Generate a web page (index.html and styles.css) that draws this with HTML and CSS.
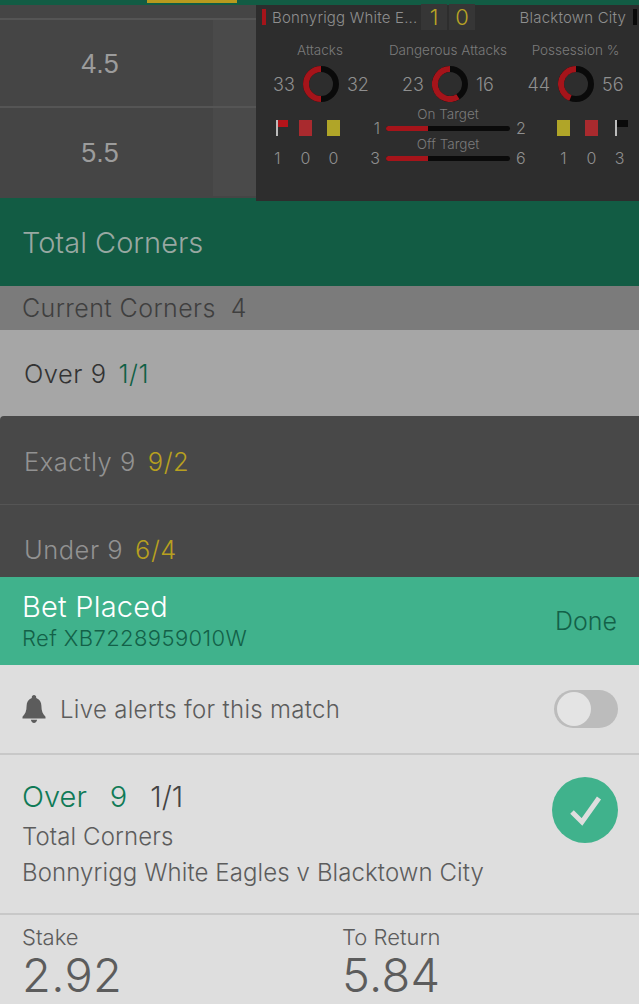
FILE: index.html
```html
<!DOCTYPE html>
<html lang="en">
<head>
    <meta charset="UTF-8" />
    <title>Bet placed</title>
    <link rel="stylesheet" href="styles.css">
</head>
<body>
    <div class="top-strip"><div class="tab-marker"></div></div>

    <section class="lines">
        <div class="line-gap"></div>
        <div class="line-row"><span class="line-label">4.5</span><span class="line-side"></span></div>
        <div class="line-row"><span class="line-label">5.5</span><span class="line-side"></span></div>

        <!-- Match stats overlay -->
        <aside class="stats">
            <div class="score-bar">
                <span class="team-mark red"></span>
                <span class="team home">Bonnyrigg White E...</span>
                <span class="score">1</span>
                <span class="score">0</span>
                <span class="team away">Blacktown City</span>
                <span class="team-mark black"></span>
            </div>
            <div class="stat-cols">
                <div class="stat">
                    <div class="stat-title">Attacks</div>
                    <div class="ring-row">
                        <span>33</span>
                        <svg class="ring" viewBox="0 0 36 36"><circle class="ring-away" cx="18" cy="18" r="15"/><path class="ring-home" d="M18 3A15 15 0 0 0 18 33"/></svg>
                        <span>32</span>
                    </div>
                </div>
                <div class="stat">
                    <div class="stat-title">Dangerous Attacks</div>
                    <div class="ring-row">
                        <span>23</span>
                        <svg class="ring" viewBox="0 0 36 36"><circle class="ring-away" cx="18" cy="18" r="15"/><path class="ring-home" d="M18 3A15 15 0 1 0 25.950 30.700"/></svg>
                        <span>16</span>
                    </div>
                </div>
                <div class="stat">
                    <div class="stat-title">Possession %</div>
                    <div class="ring-row">
                        <span>44</span>
                        <svg class="ring" viewBox="0 0 36 36"><circle class="ring-away" cx="18" cy="18" r="15"/><path class="ring-home" d="M18 3A15 15 0 0 0 12.480 31.950"/></svg>
                        <span>56</span>
                    </div>
                </div>
            </div>
            <div class="stat-cols lower">
                <div class="cards home-cards">
                    <div class="card-cell">
                        <svg class="flag home-flag" viewBox="0 0 13 16"><rect x="0" y="0" width="2" height="16" fill="#bbb"/><rect x="2" y="0" width="10" height="7" fill="#b5141a"/></svg>
                        <span>1</span>
                    </div>
                    <div class="card-cell"><i class="card red-card"></i><span>0</span></div>
                    <div class="card-cell"><i class="card yellow-card"></i><span>0</span></div>
                </div>
                <div class="targets">
                    <div class="target-title">On Target</div>
                    <div class="target-row"><span class="target-num left">1</span><div class="bar"><div class="bar-fill" style="width:34%"></div></div><span class="target-num">2</span></div>
                    <div class="target-title">Off Target</div>
                    <div class="target-row"><span class="target-num left">3</span><div class="bar"><div class="bar-fill" style="width:34%"></div></div><span class="target-num">6</span></div>
                </div>
                <div class="cards away-cards">
                    <div class="card-cell"><i class="card yellow-card"></i><span>1</span></div>
                    <div class="card-cell"><i class="card red-card"></i><span>0</span></div>
                    <div class="card-cell">
                        <svg class="flag away-flag" viewBox="0 0 13 16"><rect x="0" y="0" width="2" height="16" fill="#bbb"/><rect x="2" y="0" width="11" height="7" fill="#0a0a0a"/></svg>
                        <span>3</span>
                    </div>
                </div>
            </div>
        </aside>
    </section>

    <header class="market-head">Total Corners</header>
    <div class="market-info"><span>Current Corners</span><span>4</span></div>
    <div class="market-row selected"><span>Over 9</span><span class="odds green">1/1</span></div>
    <div class="market-row after-selected"><span>Exactly 9</span><span class="odds">9/2</span></div>
    <div class="market-row cut"><span>Under 9</span><span class="odds">6/4</span></div>

    <section class="slip">
        <div class="placed">
            <div>
                <div class="placed-title">Bet Placed</div>
                <div class="placed-ref">Ref XB7228959010W</div>
            </div>
            <div class="done">Done</div>
        </div>
        <div class="alerts">
            <svg class="bell" viewBox="0 0 24 28"><path d="M12 0c-1.300 0-2.200 1-2.200 2.200v.7C6.400 4 4.600 7 4.600 10.800c0 5.200-1.300 8.200-4.100 10.900v1.800h23v-1.800c-2.800-2.700-4.100-5.700-4.100-10.900 0-3.800-1.800-6.800-5.200-7.900v-.7C14.200 1 13.300 0 12 0zM8.900 24.800c.3 1.900 1.500 3.200 3.100 3.200s2.800-1.300 3.100-3.200z"/></svg>
            <span class="alerts-text">Live alerts for this match</span>
            <span class="toggle"><i class="knob"></i></span>
        </div>
        <div class="bet">
            <div class="bet-info">
                <div class="bet-pick"><span class="green-text">Over</span><span class="green-text">9</span><span>1/1</span></div>
                <div class="bet-line">Total Corners</div>
                <div class="bet-line">Bonnyrigg White Eagles v Blacktown City</div>
            </div>
            <svg class="tick" viewBox="0 0 66 66"><circle cx="33" cy="33" r="33" fill="#40b28c"/><path d="M20 35l10 10L47 21" fill="none" stroke="#dedede" stroke-width="5"/></svg>
        </div>
        <div class="totals">
            <div class="total"><div class="total-label">Stake</div><div class="total-value">2.92</div></div>
            <div class="total"><div class="total-label">To Return</div><div class="total-value">5.84</div></div>
        </div>
    </section>
</body>
</html>
```

FILE: styles.css
```css
html, body {
    margin: 0;
    height: 1004px;
    overflow: hidden;
    background: #dedede;
    font-family: Inter, "Liberation Sans", sans-serif;
    font-weight: 300;
}
.top-strip {
    height: 5px;
    background: #125c44;
}
.tab-marker {
    width: 90px;
    height: 3px;
    margin-left: 147px;
    background: #b89a1e;
}

/* --- lines table behind the stats --- */
.lines {
    position: relative;
    height: 193px;
    background: #454545;
}
.line-gap {
    height: 13px;
    border-bottom: 2px solid #555;
}
.line-row {
    display: flex;
    height: 86px;
    width: 256px;
}
.line-row + .line-row {
    border-top: 2px solid #555;
    height: 88px;
}
.line-label {
    width: 200px;
    display: flex;
    align-items: center;
    justify-content: center;
    padding-top: 3px;
    box-sizing: border-box;
    font-family: "Liberation Sans", sans-serif;
    font-size: 27px;
    color: #9c9c9c;
}
.line-side {
    margin-left: 13px;
    flex: 1;
    background: #4a4a4a;
}

/* --- stats overlay --- */
.stats {
    position: absolute;
    top: 0;
    left: 256px;
    width: 383px;
    height: 196px;
    background: #2d2d2d;
    color: #8f8f8f;
}
.score-bar {
    display: flex;
    align-items: center;
    height: 24px;
    padding: 0 2px 0 6px;
    font-size: 15px;
    letter-spacing: 0.2px;
}
.team-mark {
    width: 4px;
    height: 16px;
}
.team-mark.red { background: #a5141a; }
.team-mark.black { background: #0a0a0a; }
.team {
    color: #8f8f8f;
    white-space: nowrap;
}
.team.home {
    margin: 0 4px 0 6px;
    width: 145px;
}
.team.away {
    margin-left: auto;
    margin-right: 7px;
}
.score {
    width: 26px;
    height: 26px;
    margin-right: 2px;
    background: #363636;
    color: #b8a425;
    font-size: 22px;
    line-height: 26px;
    text-align: center;
    letter-spacing: 0;
}
.stat-cols {
    display: grid;
    grid-template-columns: 128px 128px 127px;
}
.stat {
    padding-top: 13px;
    text-align: center;
}
.stat-title {
    font-size: 13.500px;
    line-height: 16px;
    color: #7b7b7b;
    white-space: nowrap;
}
.ring-row {
    display: flex;
    align-items: center;
    justify-content: center;
    gap: 8px;
    margin-top: 8px;
    font-size: 18px;
    color: #8f8f8f;
}
.stat:first-child .ring-row {
    padding-left: 2px;
}
.ring {
    width: 36px;
    height: 36px;
    fill: none;
    stroke-width: 6;
}
.ring-away { stroke: #0a0a0a; }
.ring-home { stroke: #a5141a; }

.lower {
    margin-top: 4px;
}
.cards {
    display: flex;
    gap: 15px;
    padding-top: 14px;
}
.home-cards { padding-left: 15px; }
.away-cards { padding-left: 45px; }
.card-cell {
    width: 13px;
    display: flex;
    flex-direction: column;
    align-items: center;
    gap: 13px;
    font-size: 16px;
    line-height: 18px;
    color: #8f8f8f;
}
.flag {
    width: 13px;
    height: 16px;
    flex: none;
}
.home-flag { margin: 0 -5px 0 5px; }
.away-flag { margin: 0 -2px 0 2px; }
.card {
    display: block;
    width: 13px;
    height: 16px;
}
.red-card { background: #a92a2e; }
.yellow-card { background: #b0a528; }
.targets {
    text-align: center;
}
.target-title {
    height: 14px;
    font-size: 13.500px;
    line-height: 17px;
    color: #7b7b7b;
}
.target-row {
    display: flex;
    align-items: center;
    justify-content: center;
    gap: 6px;
    height: 16px;
    margin: 0 -20px;
    font-size: 16px;
    color: #8f8f8f;
}
.target-num {
    flex: none;
    width: 12px;
    text-align: left;
}
.target-num.left {
    text-align: right;
}
.bar {
    flex: none;
    width: 124px;
    height: 5px;
    border-radius: 3px;
    background: #0a0a0a;
    overflow: hidden;
}
.bar-fill {
    height: 100%;
    background: #a5141a;
}

/* --- market --- */
.market-head {
    height: 88px;
    padding-left: 22px;
    background: #125c44;
    color: #98a8a2;
    font-size: 29px;
    line-height: 90px;
}
.market-info {
    display: flex;
    gap: 15px;
    height: 44px;
    padding-left: 22px;
    background: #7b7b7b;
    color: #3f3f3f;
    font-size: 25px;
    line-height: 45px;
    letter-spacing: 0.4px;
}
.market-row {
    display: flex;
    gap: 12px;
    height: 87px;
    padding-left: 24px;
    border-top: 1px solid #555;
    background: #484848;
    color: #929292;
    font-size: 25.500px;
    line-height: 90px;
    letter-spacing: 0.5px;
}
.market-row.selected {
    height: 86px;
    border-top: 0;
    background: #a6a6a6;
    box-shadow: 0 6px 0 #a6a6a6;
    color: #333;
    line-height: 88px;
}
.market-row.after-selected {
    height: 88px;
    border-top: 0;
    border-top-left-radius: 4px;
    line-height: 92px;
}
.market-row.cut {
    height: 72px;
}
.odds { color: #b8a01f; }
.odds.green { color: #0f6045; }

/* --- bet slip --- */
.slip {
    background: #dedede;
    color: #5c5c5c;
}
.placed {
    display: flex;
    align-items: center;
    justify-content: space-between;
    height: 88px;
    padding: 0 22px;
    background: #40b28c;
}
.placed-title {
    color: #fff;
    font-size: 29px;
    line-height: 34px;
    letter-spacing: 0.2px;
}
.placed-ref {
    color: #136148;
    font-size: 22px;
    line-height: 28px;
    letter-spacing: 0.4px;
}
.done {
    color: #136148;
    font-size: 25px;
}
.alerts {
    display: flex;
    align-items: center;
    height: 88px;
    padding: 0 21px;
    border-bottom: 2px solid #c8c8c8;
    font-size: 24px;
    letter-spacing: 0.3px;
}
.bell {
    width: 26px;
    height: 28px;
    fill: #5c5c5c;
    margin-right: 13px;
}
.toggle {
    margin-left: auto;
    width: 64px;
    height: 38px;
    border-radius: 19px;
    background: #bcbcbc;
    display: flex;
    align-items: center;
    padding-left: 3px;
    box-sizing: border-box;
}
.knob {
    width: 34px;
    height: 34px;
    border-radius: 50%;
    background: #e4e4e4;
}
.bet {
    display: flex;
    justify-content: space-between;
    height: 158px;
    padding: 0 21px 0 22px;
    border-bottom: 2px solid #c8c8c8;
}
.bet-pick {
    display: flex;
    gap: 23px;
    padding-top: 22px;
    margin-bottom: 2px;
    font-size: 29px;
    line-height: 40px;
    color: #444;
}
.green-text { color: #0f7a56; }
.bet-line {
    font-size: 24px;
    line-height: 36px;
    letter-spacing: 0.1px;
}
.tick {
    width: 66px;
    height: 66px;
    margin-top: 22px;
}
.totals {
    display: flex;
    padding: 8px 0 0 22px;
}
.total {
    flex: none;
    width: 320px;
}
.total-label {
    font-size: 22px;
    line-height: 28px;
}
.total-value {
    font-size: 47px;
    line-height: 47px;
    letter-spacing: 0.3px;
}
```
